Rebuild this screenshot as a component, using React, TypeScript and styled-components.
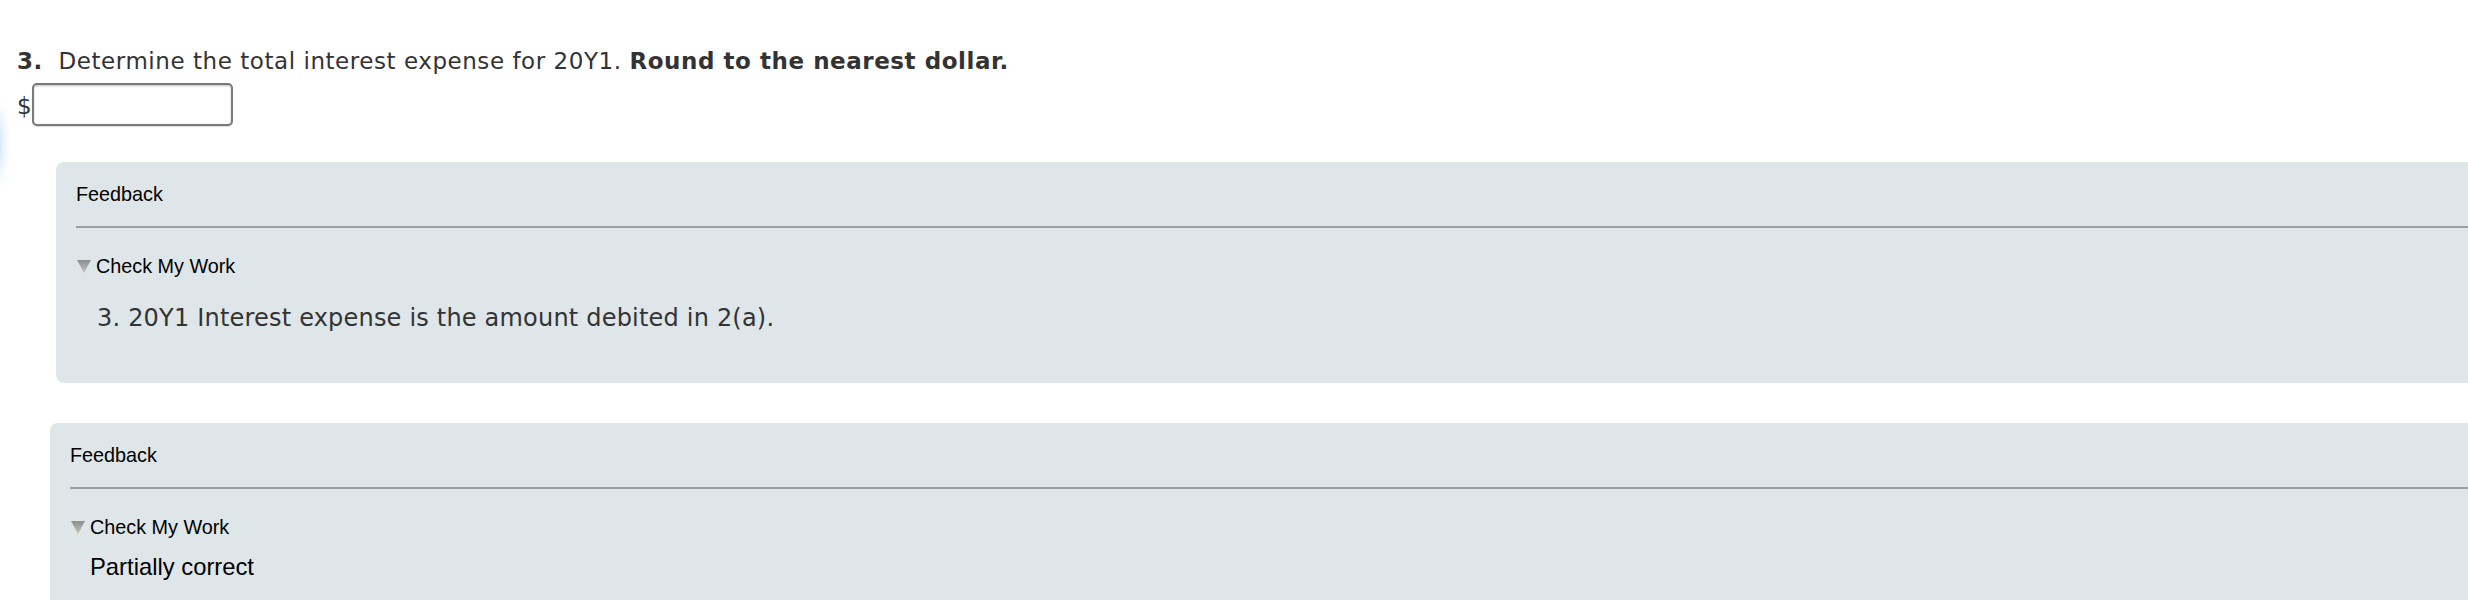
import React from "react";
import styled, { createGlobalStyle } from "styled-components";

const GlobalStyle = createGlobalStyle`
    html, body {
        margin: 0;
        padding: 0;
        background: #ffffff;
        overflow: hidden;
    }
`

const Page = styled.div`
    position: relative;
    width: 2600px;
    padding-top: 47px;
    font-family: "DejaVu Sans", Verdana, sans-serif;
    color: #333333;
`

const Glow = styled.div`
    position: absolute;
    left: -22px;
    top: 100px;
    width: 30px;
    height: 88px;
    border-radius: 50%;
    background: radial-gradient(ellipse at center, rgba(160, 205, 245, 0.85) 0%, rgba(200, 228, 252, 0.5) 45%, rgba(255, 255, 255, 0) 75%);
    filter: blur(3px);
`

const Question = styled.div`
    padding-left: 17px;
    font-size: 23px;
    line-height: 28px;
    letter-spacing: 0.55px;
`

const Strong = styled.b`
    font-weight: bold;
`

const AnswerRow = styled.div`
    display: flex;
    flex-direction: row;
    align-items: center;
    padding-left: 17px;
    margin-top: 8px;
    font-size: 23px;
`

const Dollar = styled.span`
    line-height: 28px;
    padding-top: 2px;
`

const Input = styled.input`
    box-sizing: border-box;
    width: 201px;
    height: 43px;
    margin: 0;
    border: 2px solid #7a7a7a;
    border-radius: 5px;
    box-shadow: inset 0 1px 2px rgba(0, 0, 0, 0.25), 0 1px 1px rgba(0, 0, 0, 0.15);
    background: #ffffff;
`

const Panel = styled.div<{ $indent: number; $gap: number }>`
    margin-left: ${p => p.$indent}px;
    margin-top: ${p => p.$gap}px;
    padding: 0 0 0 20px;
    background: #dfe6e9;
    border-radius: 8px 0 0 8px;
    font-family: "Liberation Sans", Arial, Helvetica, sans-serif;
    color: #000000;
`

const PanelTitle = styled.div`
    padding: 21px 0 21px;
    font-size: 19.8px;
    line-height: 22px;
    border-bottom: 2px solid #999ea3;
`

const Toggle = styled.div`
    display: flex;
    flex-direction: row;
    align-items: center;
    gap: 5px;
    margin-top: 27px;
    padding-left: 1px;
    font-size: 19.8px;
    line-height: 22px;
`

const Hint = styled.div`
    margin-top: 26px;
    padding: 0 0 50px 21px;
    font-family: "DejaVu Sans", Verdana, sans-serif;
    font-size: 24px;
    line-height: 30px;
    letter-spacing: 0.2px;
    color: #333333;
`

const Status = styled.div`
    margin-top: 16px;
    padding: 0 0 60px 20px;
    font-size: 23.8px;
    line-height: 26px;
    color: #000000;
`

const Triangle = () => (
    <svg width="14" height="13" viewBox="0 0 14 13">
        <defs>
            <linearGradient id="tri" x1="0" y1="0" x2="0" y2="1">
                <stop offset="0" stopColor="#8e8e8e" />
                <stop offset="1" stopColor="#c4c4c4" />
            </linearGradient>
        </defs>
        <polygon points="0,0 14,0 7,13" fill="url(#tri)" />
    </svg>
)

const App = () => {
    return (
        <Page>
            <GlobalStyle />
            <Glow />
            <Question>
                <Strong>3.</Strong>&nbsp; Determine the total interest expense for 20Y1. <Strong>Round to the nearest dollar.</Strong>
            </Question>
            <AnswerRow>
                <Dollar>$</Dollar>
                <Input type="text" />
            </AnswerRow>
            <Panel $indent={56} $gap={36}>
                <PanelTitle>Feedback</PanelTitle>
                <Toggle>
                    <Triangle />
                    <span>Check My Work</span>
                </Toggle>
                <Hint>3. 20Y1 Interest expense is the amount debited in 2(a).</Hint>
            </Panel>
            <Panel $indent={50} $gap={40}>
                <PanelTitle>Feedback</PanelTitle>
                <Toggle>
                    <Triangle />
                    <span>Check My Work</span>
                </Toggle>
                <Status>Partially correct</Status>
            </Panel>
        </Page>
    )
};

export default App;
